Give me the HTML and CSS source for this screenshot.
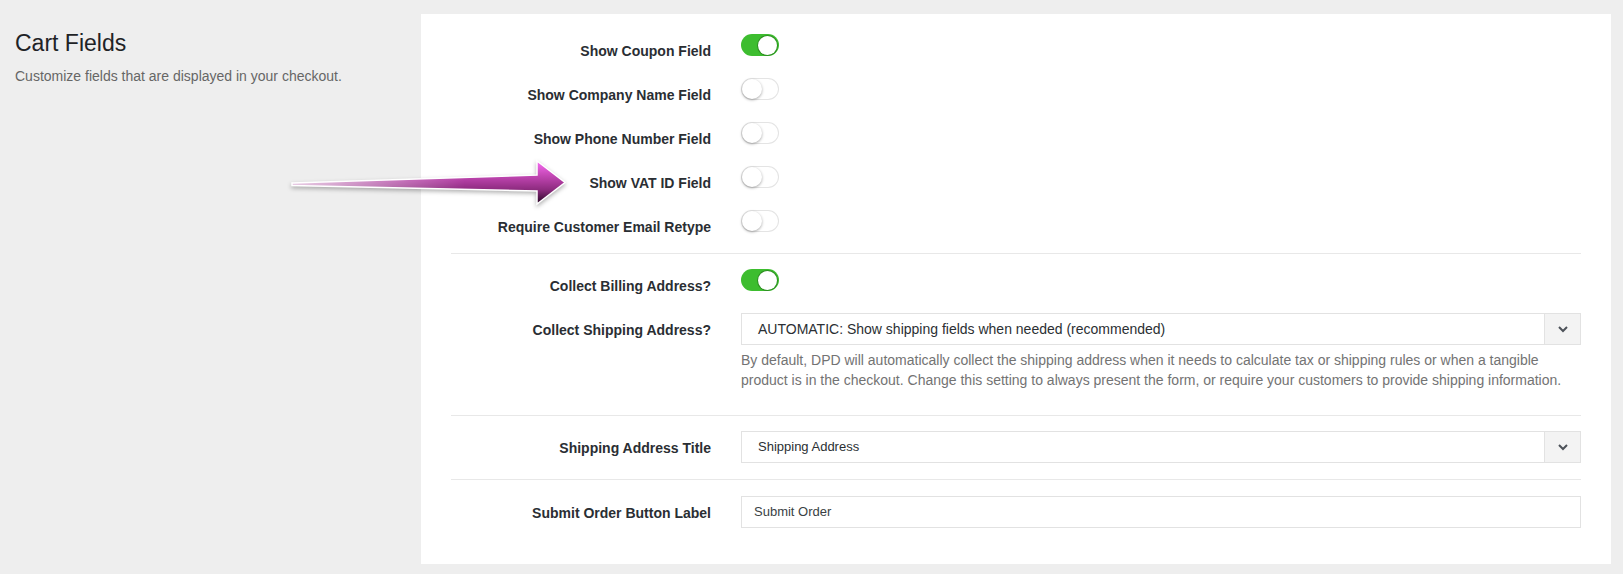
FILE: index.html
```html
<!DOCTYPE html>
<html lang="en">
<head>
<meta charset="utf-8">
<title>Cart Fields</title>
<link rel="stylesheet" href="styles.css">
</head>
<body>
<div class="page">
  <aside class="intro">
    <h2 class="intro-title">Cart Fields</h2>
    <p class="intro-text">Customize fields that are displayed in your checkout.</p>
  </aside>
  <main class="card">
    <section class="group group-toggles">
      <div class="row">
        <label class="label">Show Coupon Field</label>
        <div class="control"><span class="toggle on"><span class="knob"></span></span></div>
      </div>
      <div class="row">
        <label class="label">Show Company Name Field</label>
        <div class="control"><span class="toggle"><span class="knob"></span></span></div>
      </div>
      <div class="row">
        <label class="label">Show Phone Number Field</label>
        <div class="control"><span class="toggle"><span class="knob"></span></span></div>
      </div>
      <div class="row">
        <label class="label">Show VAT ID Field</label>
        <div class="control"><span class="toggle"><span class="knob"></span></span></div>
      </div>
      <div class="row">
        <label class="label">Require Customer Email Retype</label>
        <div class="control"><span class="toggle"><span class="knob"></span></span></div>
      </div>
    </section>
    <section class="group group-address">
      <div class="row">
        <label class="label">Collect Billing Address?</label>
        <div class="control"><span class="toggle on"><span class="knob"></span></span></div>
      </div>
      <div class="row">
        <label class="label">Collect Shipping Address?</label>
        <div class="control">
          <div class="select">
            <span class="select-value">AUTOMATIC: Show shipping fields when needed (recommended)</span>
            <span class="select-caret"><svg width="12" height="8" viewBox="0 0 12 8"><polyline points="2,2 6,6 10,2" fill="none" stroke="#4d5259" stroke-width="2"/></svg></span>
          </div>
          <p class="help">By default, DPD will automatically collect the shipping address when it needs to calculate tax or shipping rules or when a tangible product is in the checkout. Change this setting to always present the form, or require your customers to provide shipping information.</p>
        </div>
      </div>
    </section>
    <section class="group group-title">
      <div class="row">
        <label class="label">Shipping Address Title</label>
        <div class="control">
          <div class="select small">
            <span class="select-value">Shipping Address</span>
            <span class="select-caret"><svg width="12" height="8" viewBox="0 0 12 8"><polyline points="2,2 6,6 10,2" fill="none" stroke="#4d5259" stroke-width="2"/></svg></span>
          </div>
        </div>
      </div>
    </section>
    <section class="group group-submit">
      <div class="row">
        <label class="label">Submit Order Button Label</label>
        <div class="control">
          <div class="input">Submit Order</div>
        </div>
      </div>
    </section>
  </main>
</div>
<svg class="arrow" width="300" height="64" viewBox="0 0 300 64">
  <defs>
    <linearGradient id="ag" x1="0" y1="6" x2="0" y2="49" gradientUnits="userSpaceOnUse">
      <stop offset="0" stop-color="#f86cf4"/>
      <stop offset="0.3" stop-color="#c94bbb"/>
      <stop offset="0.5" stop-color="#a9399a"/>
      <stop offset="0.68" stop-color="#8a2a7c"/>
      <stop offset="1" stop-color="#220420"/>
    </linearGradient>
    <linearGradient id="fade" x1="7" y1="0" x2="180" y2="0" gradientUnits="userSpaceOnUse">
      <stop offset="0" stop-color="#ffffff" stop-opacity="0.75"/>
      <stop offset="1" stop-color="#ffffff" stop-opacity="0"/>
    </linearGradient>
  </defs>
  <path d="M7,28 L252,20 L252,6 L280,27.5 L252,49 L252,36 L7,30.5 Z" fill="url(#ag)" stroke="#ffffff" stroke-width="1.5" stroke-linejoin="miter"/>
  <path d="M7,28 L252,20 L252,36 L7,30.5 Z" fill="url(#fade)"/>
</svg>
</body>
</html>
```
FILE: styles.css
```css
html, body {
  margin: 0;
  padding: 0;
}
body {
  background: #eeeeee;
  font-family: "Liberation Sans", Arial, sans-serif;
  color: #23282d;
  position: relative;
  width: 1623px;
  height: 574px;
  overflow: hidden;
}
.page {
  display: flex;
  align-items: flex-start;
  padding: 14px 12px 12px 0;
}
.intro {
  flex: 0 0 421px;
  box-sizing: border-box;
  padding: 15px 0 0 15px;
}
.intro-title {
  margin: 0;
  font-size: 23px;
  font-weight: normal;
  line-height: 28px;
  color: #1f2326;
}
.intro-text {
  margin: 9px 0 0;
  font-size: 14px;
  line-height: 20px;
  color: #666666;
}
.card {
  flex: 1;
  background: #ffffff;
  padding: 0 30px;
}
.group {
  display: flex;
  flex-direction: column;
  gap: 10px;
  border-bottom: 1px solid #e8e8e8;
}
.group-toggles { padding: 20px 0 9px; }
.group-address { padding: 15px 0 25px; }
.group-title { padding: 15px 0 16px; }
.group-submit { padding: 16px 0 36px; border-bottom: none; }
.row {
  display: grid;
  grid-template-columns: 260px 1fr;
  column-gap: 30px;
  min-height: 32px;
}
.group-toggles .row,
.group-address .row:first-child {
  min-height: 34px;
}
.label {
  text-align: right;
  font-weight: bold;
  font-size: 14px;
  line-height: 20px;
  padding-top: 7px;
  color: #2a2e33;
}
.control {
  display: flex;
  flex-direction: column;
  align-items: flex-start;
}
.toggle {
  box-sizing: border-box;
  display: flex;
  align-items: center;
  justify-content: flex-start;
  width: 38px;
  height: 22px;
  padding: 1px;
  border-radius: 11px;
  background: #ffffff;
  box-shadow: inset 0 0 0 1px #e4e4e4;
}
.toggle .knob {
  width: 20px;
  height: 20px;
  border-radius: 50%;
  background: #ffffff;
  box-shadow: 0 1px 3px rgba(0, 0, 0, 0.35);
}
.toggle.on {
  justify-content: flex-end;
  background: #3dbd2f;
  box-shadow: none;
}
.toggle.on .knob {
  box-shadow: 0 0 0 1px #2d8f22;
  width: 19px;
  height: 19px;
  margin-right: 1px;
}
.select {
  box-sizing: border-box;
  align-self: stretch;
  display: flex;
  align-items: stretch;
  height: 32px;
  border: 1px solid #e2e2e2;
  background: #ffffff;
}
.select-value {
  flex: 1;
  padding-left: 16px;
  font-size: 14px;
  line-height: 30px;
  color: #2b2f33;
}
.select.small .select-value {
  font-size: 13px;
}
.select-caret {
  flex: 0 0 35px;
  display: flex;
  align-items: center;
  justify-content: center;
  background: #f3f3f3;
  border-left: 1px solid #e2e2e2;
}
.help {
  margin: 5px 0 0;
  font-size: 14px;
  line-height: 20px;
  color: #737373;
}
.input {
  box-sizing: border-box;
  align-self: stretch;
  height: 32px;
  border: 1px solid #e2e2e2;
  padding-left: 12px;
  font-size: 13px;
  line-height: 30px;
  color: #3a3f44;
}
.arrow {
  position: absolute;
  left: 285px;
  top: 155px;
  filter: drop-shadow(0 2px 2px rgba(0, 0, 0, 0.3));
}
```
